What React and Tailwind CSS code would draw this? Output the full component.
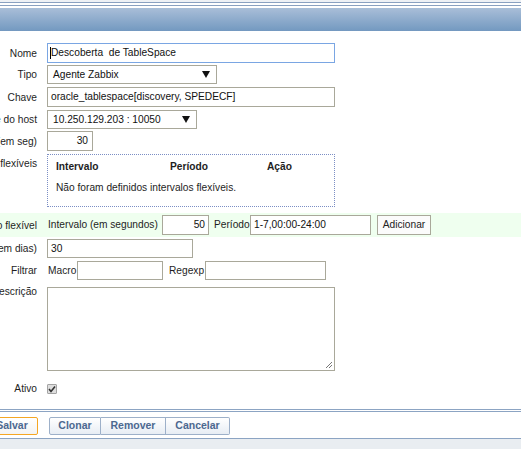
import React from "react";

const F = { fontFamily: '"Liberation Sans", Arial, sans-serif' };

function Label({ children, top = false, className = "" }) {
  return (
    <div
      className={`w-[47px] shrink-0 pr-[10px] flex justify-end overflow-hidden ${top ? "items-start" : "items-center"} ${className}`}
    >
      <span className="shrink-0 whitespace-nowrap text-[10.2px] leading-[13px] text-[#1e1e1e]">{children}</span>
    </div>
  );
}

function Box({ w, h = "h-[20px]", children, className = "", right = false }) {
  return (
    <div
      className={`${w} ${h} shrink-0 border border-[#a9a89a] bg-white px-[4px] flex items-center ${right ? "justify-end" : ""} text-[10.2px] text-[#111] whitespace-nowrap overflow-hidden ${className}`}
    >
      {children}
    </div>
  );
}

function Select({ w, text }) {
  return (
    <div className={`${w} h-[19px] shrink-0 border border-[#a9a89a] bg-white pl-[5px] pr-[6px] flex items-center justify-between text-[10.2px] text-[#111]`}>
      <span>{text}</span>
      <svg width="8" height="7" viewBox="0 0 8 7"><path d="M0 0H8L4 7Z" fill="#111" /></svg>
    </div>
  );
}

function Btn({ children, className = "" }) {
  return (
    <div
      className={`h-[18px] flex items-center justify-center border border-[#9db0c9] bg-gradient-to-b from-white to-[#e7edf4] text-[10.5px] font-bold text-[#4c6890] ${className}`}
    >
      {children}
    </div>
  );
}

export default function App() {
  return (
    <div className="w-[521px] h-[449px] bg-white overflow-hidden flex flex-col" style={F}>
      {/* header */}
      <div className="h-[2px] bg-[#eef1f5]" />
      <div className="h-[1px] bg-[#8aa1c1]" />
      <div className="h-[2px] bg-white" />
      <div className="h-[1px] bg-[#8aa1c1]" />
      <div className="h-[2px] bg-white" />
      <div className="h-[23px] bg-gradient-to-b from-[#a9bed8] to-[#7399c0]" />

      {/* Nome */}
      <div className="mt-[12px] h-[20px] flex">
        <Label>Nome</Label>
        <div className="w-[288px] h-[20px] border border-[#7aa6e3] bg-white pl-[2px] flex items-center text-[10.2px] text-[#111]">
          <span className="w-[1px] h-[12px] bg-black" />
          <span className="whitespace-pre">Descoberta  de TableSpace</span>
        </div>
      </div>

      {/* Tipo */}
      <div className="mt-[2px] h-[19px] flex">
        <Label>Tipo</Label>
        <Select w="w-[170px]" text="Agente Zabbix" />
      </div>

      {/* Chave */}
      <div className="mt-[3px] h-[20px] flex">
        <Label>Chave</Label>
        <Box w="w-[288px]" className="pl-[3px]">oracle_tablespace[discovery, SPEDECF]</Box>
      </div>

      {/* Interface */}
      <div className="mt-[3px] h-[19px] flex">
        <Label>Interface do host</Label>
        <Select w="w-[150px]" text="10.250.129.203 : 10050" />
      </div>

      {/* Intervalo */}
      <div className="mt-[2px] h-[20px] flex">
        <Label>Intervalo de atualização (em seg)</Label>
        <Box w="w-[46px]" right>30</Box>
      </div>

      {/* flexible intervals box */}
      <div className="mt-[3px] h-[53px] flex">
        <Label top className="pt-[3px]">Intervalos flexíveis</Label>
        <div className="w-[288px] h-[53px] border border-dotted border-[#7b8ec4] pl-[8px] pt-[5px] text-[10.2px] text-[#1e1e1e]">
          <div className="flex font-bold h-[14px] items-center">
            <span className="w-[114px]">Intervalo</span>
            <span className="w-[97px]">Período</span>
            <span>Ação</span>
          </div>
          <div className="mt-[7px] leading-[13px]">Não foram definidos intervalos flexíveis.</div>
        </div>
      </div>

      {/* new flexible */}
      <div className="mt-[6px] h-[24px] flex items-center bg-[#efffef]">
        <Label>Novo intervalo flexível</Label>
        <span className="text-[10.2px] text-[#1e1e1e] w-[115px] shrink-0 pl-[1px] whitespace-nowrap">Intervalo (em segundos)</span>
        <Box w="w-[47px]" right className="pr-[3px]">50</Box>
        <span className="text-[10.2px] text-[#1e1e1e] w-[41px] shrink-0 pl-[5px] whitespace-nowrap">Período</span>
        <Box w="w-[121px]" className="pl-[3px]">1-7,00:00-24:00</Box>
        <div className="ml-[6px] w-[54px] h-[20px] border border-[#a9a89a] bg-[#fbfbfb] flex items-center justify-center text-[10.2px] text-[#222]">
          Adicionar
        </div>
      </div>

      {/* dias */}
      <div className="mt-[2px] h-[19px] flex">
        <Label>Manter dados perdidos por (em dias)</Label>
        <Box w="w-[146px]" h="h-[19px]" className="pl-[3px]">30</Box>
      </div>

      {/* Filtrar */}
      <div className="mt-[3px] h-[19px] flex items-center">
        <Label>Filtrar</Label>
        <span className="text-[10.2px] text-[#1e1e1e] w-[30px] shrink-0 pl-[1px] whitespace-nowrap">Macro</span>
        <Box w="w-[86px]" h="h-[19px]" />
        <span className="text-[10.2px] text-[#1e1e1e] w-[42px] shrink-0 pl-[6px] whitespace-nowrap">Regexp</span>
        <Box w="w-[121px]" h="h-[19px]" />
      </div>

      {/* Descrição */}
      <div className="mt-[7px] h-[84px] flex">
        <Label top className="-mt-[2px]">Descrição</Label>
        <div className="relative w-[288px] h-[84px] border border-[#a9a89a] bg-white">
          <svg className="absolute right-[1px] bottom-[1px]" width="9" height="9" viewBox="0 0 9 9">
            <path d="M8 2L2 8M8 5L5 8" stroke="#777" strokeWidth="1" />
          </svg>
        </div>
      </div>

      {/* Ativo */}
      <div className="mt-[12px] h-[11px] flex items-center">
        <Label>Ativo</Label>
        <div className="w-[10px] h-[10px] border border-[#a4a4a4] bg-[#dedede] rounded-[1px] flex items-center justify-center">
          <svg width="8" height="8" viewBox="0 0 8 8">
            <path d="M1 4L3 6.5L7 1.5" stroke="#333" strokeWidth="1.6" fill="none" />
          </svg>
        </div>
      </div>

      {/* bottom */}
      <div className="mt-[15px] h-[1px] bg-[#8ca4c3]" />
      <div className="h-[1px] bg-white" />
      <div className="h-[1px] bg-[#8ca4c3]" />
      <div className="mt-[5px] h-[18px] flex">
        <div className="w-[38px] shrink-0 flex justify-end overflow-hidden">
          <div className="w-[52px] shrink-0 h-[18px] flex items-center justify-center rounded-[2px] border border-[#f5a623] bg-gradient-to-b from-white to-[#f3f3f3] text-[10.5px] font-bold text-[#4c6890]">
            Salvar
          </div>
        </div>
        <div className="ml-[11px] flex">
          <Btn className="w-[52px] rounded-l-[2px]">Clonar</Btn>
          <Btn className="w-[65px] border-l-0">Remover</Btn>
          <Btn className="w-[64px] border-l-0 rounded-r-[2px]">Cancelar</Btn>
        </div>
      </div>
      <div className="mt-[3px] h-[1px] bg-[#8ca4c3]" />
      <div className="flex-1 bg-[#e9edf1]" />
    </div>
  );
}
